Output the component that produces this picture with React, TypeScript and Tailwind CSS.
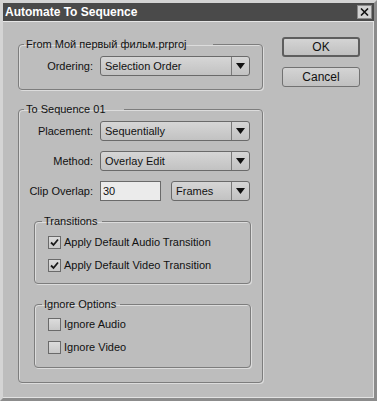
import React from 'react';

const font = { fontFamily: '"Liberation Sans", Arial, sans-serif' };

function Arrow() {
  return (
    <svg width="9" height="6" viewBox="0 0 9 6">
      <polygon points="0,0 9,0 4.5,6" fill="#111" />
    </svg>
  );
}

function Select({ value, width }: { value: string; width: string }) {
  return (
    <div className={`${width} h-[20px] flex border border-[#6a6a6a] rounded-[3px] bg-gradient-to-b from-[#d6d6d6] to-[#c2c2c2]`}>
      <div className="flex-1 flex items-center pl-[4px] text-[11px] text-[#111]">{value}</div>
      <div className="w-[18px] flex items-center justify-center border-l border-[#7a7a7a]">
        <Arrow />
      </div>
    </div>
  );
}

function Check({ checked, label }: { checked: boolean; label: string }) {
  return (
    <div className="h-[16px] flex items-center">
      <div className="w-[13px] h-[13px] border border-[#6a6a6a] bg-gradient-to-b from-[#dcdcdc] to-[#c8c8c8] flex items-center justify-center">
        {checked && (
          <svg width="9" height="9" viewBox="0 0 9 9">
            <path d="M1 4.5 L3.5 7 L8 1.5" fill="none" stroke="#1a1a1a" strokeWidth="1.8" />
          </svg>
        )}
      </div>
      <span className="ml-[3px] text-[11px] text-[#111]">{label}</span>
    </div>
  );
}

function Row({ label, children }: { label: string; children: React.ReactNode }) {
  return (
    <div className="flex items-center h-[20px]">
      <div className="w-[74px] text-right text-[11px] text-[#111]">{label}</div>
      <div className="ml-[7px] flex items-center">{children}</div>
    </div>
  );
}

const fs = 'border border-[#7d7d7d] rounded-[4px] shadow-[inset_1px_1px_0_#dcdcdc,1px_1px_0_#dcdcdc]';

export default function App() {
  return (
    <div style={font} className="w-[377px] h-[401px] flex flex-col bg-[#bdbdbd] border-t-[3px] border-l-[3px] border-t-[#d4d4d4] border-l-[#d4d4d4] border-r-[3px] border-b-[3px] border-r-[#8c8c8c] border-b-[#8c8c8c]">
      {/* title bar */}
      <div className="h-[18px] bg-[#4a4a4a] flex items-center justify-between pl-[2px] pr-[2px]">
        <span className="text-white font-bold text-[12px]">Automate To Sequence</span>
        <div className="w-[15px] h-[14px] bg-[#d2d2d2] border border-[#8a8a8a] flex items-center justify-center">
          <svg width="9" height="8" viewBox="0 0 9 8">
            <path d="M1 0.5 L8 7.5 M8 0.5 L1 7.5" stroke="#111" strokeWidth="1.6" />
          </svg>
        </div>
      </div>
      <div className="h-px bg-[#e6e6e6]" />

      <div className="flex-1 flex pl-[15px] pt-[15px] border-r border-b border-[#e2e2e2]">
        <div className="w-[245px] flex flex-col">
          <fieldset className={`${fs} pb-[13px]`}>
            <legend className="ml-[5px] pl-[2px] pr-[26px] text-[11px] leading-[14px] text-[#111]">From Мой первый фильм.prproj</legend>
            <div className="mt-[5px]">
              <Row label="Ordering:">
                <Select value="Selection Order" width="w-[150px]" />
              </Row>
            </div>
          </fieldset>

          <fieldset className={`${fs} mt-[12px] pb-[14px]`}>
            <legend className="ml-[5px] pl-[2px] pr-[18px] text-[11px] leading-[14px] text-[#111]">To Sequence 01</legend>
            <div className="mt-[5px] flex flex-col gap-[10px]">
              <Row label="Placement:">
                <Select value="Sequentially" width="w-[150px]" />
              </Row>
              <Row label="Method:">
                <Select value="Overlay Edit" width="w-[150px]" />
              </Row>
              <Row label="Clip Overlap:">
                <div className="w-[61px] h-[20px] border border-[#6a6a6a] bg-[#ebebeb] text-[11px] text-[#111] pl-[2px] flex items-center">30</div>
                <div className="ml-[10px]">
                  <Select value="Frames" width="w-[79px]" />
                </div>
              </Row>
            </div>

            <fieldset className={`${fs} ml-[15px] w-[217px] mt-[13px] pb-[10px] pl-[13px]`}>
              <legend className="ml-[-6px] pl-[2px] pr-[5px] text-[11px] leading-[14px] text-[#111]">Transitions</legend>
              <div className="mt-[6px] flex flex-col gap-[7px]">
                <Check checked label="Apply Default Audio Transition" />
                <Check checked label="Apply Default Video Transition" />
              </div>
            </fieldset>

            <fieldset className={`${fs} ml-[15px] w-[217px] mt-[13px] pb-[12px] pl-[13px]`}>
              <legend className="ml-[-6px] pl-[2px] pr-[4px] text-[11px] leading-[14px] text-[#111]">Ignore Options</legend>
              <div className="mt-[5px] flex flex-col gap-[7px]">
                <Check checked={false} label="Ignore Audio" />
                <Check checked={false} label="Ignore Video" />
              </div>
            </fieldset>
          </fieldset>
        </div>

        <div className="ml-[19px] w-[78px] flex flex-col gap-[10px]">
          <button className="h-[20px] border-2 border-[#5e5e5e] rounded-[3px] bg-gradient-to-b from-[#d4d4d4] to-[#c0c0c0] text-[12px] text-[#111] leading-none">OK</button>
          <button className="h-[20px] border border-[#727272] rounded-[3px] bg-gradient-to-b from-[#d4d4d4] to-[#c0c0c0] text-[12px] text-[#111] leading-none">Cancel</button>
        </div>
      </div>
    </div>
  );
}
